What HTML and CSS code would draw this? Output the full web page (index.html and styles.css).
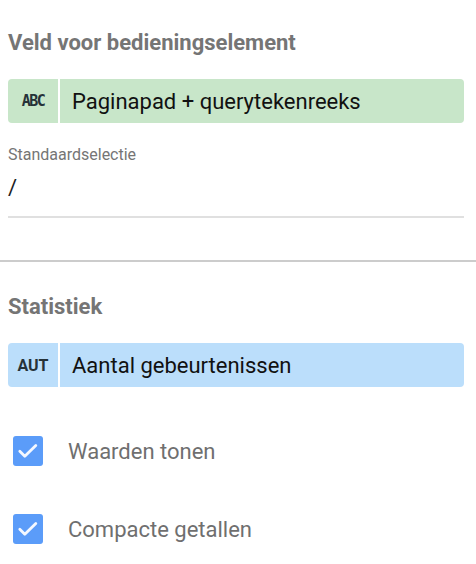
FILE: index.html
```html
<!DOCTYPE html>
<html lang="nl">
<head>
<meta charset="utf-8">
<link rel="stylesheet" href="styles.css">
</head>
<body>
<div class="panel">
  <section class="section">
    <h2 class="section-title">Veld voor bedieningselement</h2>
    <div class="chip chip-dim">
      <span class="chip-type type-text">ABC</span>
      <span class="chip-label">Paginapad + querytekenreeks</span>
    </div>
    <div class="field">
      <label class="field-label">Standaardselectie</label>
      <div class="field-value">/</div>
    </div>
  </section>
  <hr class="divider">
  <section class="section">
    <h2 class="section-title">Statistiek</h2>
    <div class="chip chip-metric">
      <span class="chip-type type-num">AUT</span>
      <span class="chip-label">Aantal gebeurtenissen</span>
    </div>
    <div class="checks">
      <div class="check-row">
        <span class="checkbox">
          <svg viewBox="0 0 30 30" width="30" height="30"><path d="M6.8 15.2 L11.8 20.2 L22.8 9.4" fill="none" stroke="#f4f8ff" stroke-width="2.8" stroke-linecap="round" stroke-linejoin="round"/></svg>
        </span>
        <span class="check-label">Waarden tonen</span>
      </div>
      <div class="check-row">
        <span class="checkbox">
          <svg viewBox="0 0 30 30" width="30" height="30"><path d="M6.8 15.2 L11.8 20.2 L22.8 9.4" fill="none" stroke="#f4f8ff" stroke-width="2.8" stroke-linecap="round" stroke-linejoin="round"/></svg>
        </span>
        <span class="check-label">Compacte getallen</span>
      </div>
    </div>
  </section>
</div>
</body>
</html>
```
FILE: styles.css
```css
html, body {
  margin: 0;
  padding: 0;
  background: #ffffff;
  font-family: Roboto, "Noto Sans", sans-serif;
}
.panel {
  width: 476px;
}
.section {
  padding: 0 12px 0 8px;
}
.section-title {
  margin: 0;
  padding-top: 30px;
  font-size: 22px;
  line-height: 26px;
  font-weight: 700;
  color: #757575;
}
.divider + .section .section-title {
  padding-top: 32px;
}
.chip {
  display: flex;
  align-items: stretch;
  height: 44px;
  margin-top: 23px;
  border-radius: 4px;
  overflow: hidden;
}
.chip-dim { background: #c8e6c9; }
.chip-metric { background: #bbdefb; }
.chip-type {
  width: 50px;
  flex: none;
  display: flex;
  align-items: center;
  justify-content: center;
  border-right: 2px solid #ffffff;
  color: #263238;
  font-weight: 700;
  font-size: 16px;
}
.type-text {
  font-family: "DejaVu Sans Mono", monospace;
  font-size: 15px;
  letter-spacing: -1.5px;
}
.chip-label {
  display: flex;
  align-items: center;
  padding-left: 12px;
  font-size: 22px;
  color: #111111;
}
.field {
  padding-top: 23px;
  border-bottom: 2px solid #e0e0e0;
}
.field-label {
  display: block;
  font-size: 16px;
  line-height: 18px;
  color: #757575;
}
.field-value {
  font-size: 22px;
  line-height: 26px;
  padding: 11px 0 15px;
  color: #202124;
}
.divider {
  margin: 42px 0 0;
  border: 0;
  height: 2px;
  background: #cccccc;
}
.checks {
  display: flex;
  flex-direction: column;
  gap: 48px;
  margin-top: 49px;
  padding-left: 5px;
}
.check-row {
  display: flex;
  align-items: center;
  height: 30px;
}
.checkbox {
  width: 30px;
  height: 30px;
  border-radius: 3px;
  background: #5b9cf9;
  display: flex;
  flex: none;
}
.check-label {
  margin-left: 25px;
  font-size: 22px;
  color: #6f6f6f;
}
```
